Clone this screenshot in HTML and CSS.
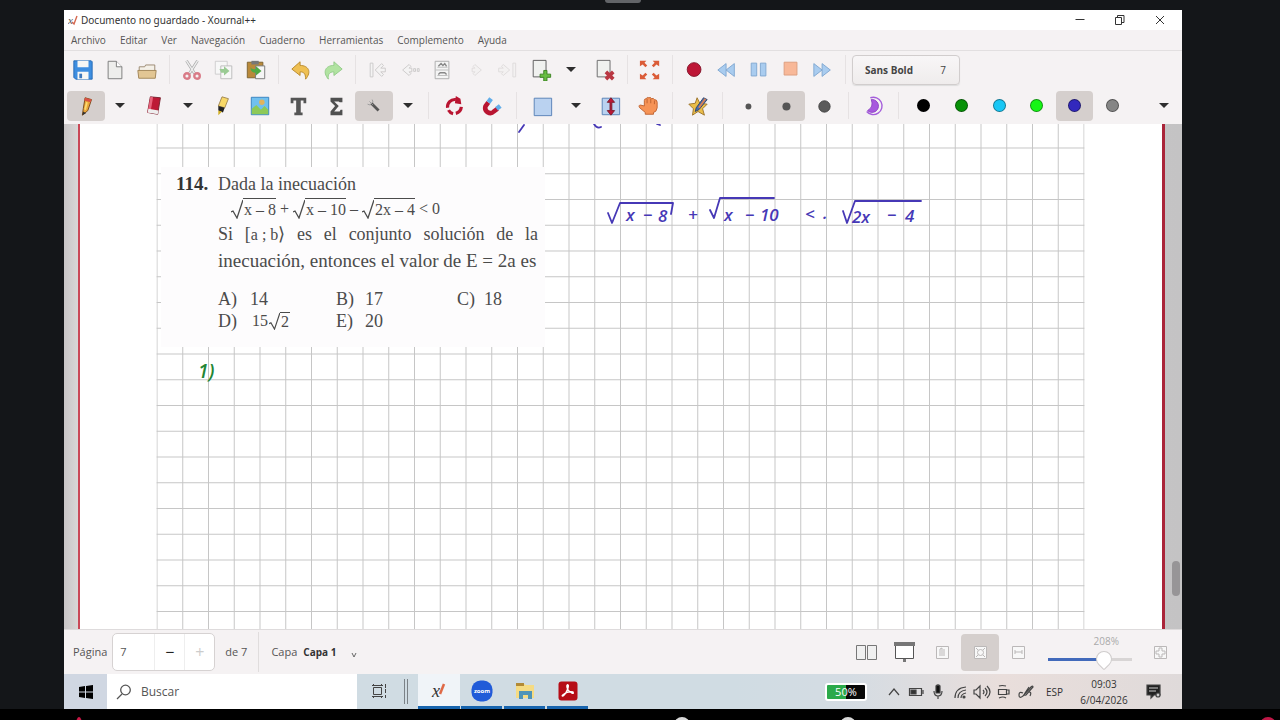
FILE: index.html
```html
<!DOCTYPE html>
<html lang="es">
<head>
<meta charset="utf-8">
<title>Documento no guardado - Xournal++</title>
<link rel="stylesheet" href="styles.css">
</head>
<body>
<div class="handle"></div>
<div class="desktop">
<main class="window">
  <header class="titlebar">
    <svg class="app-icon" width="10" height="12" viewBox="0 0 10 12"><text x="0" y="10" class="x-mark">x</text><path d="M4 8 6 10 9 2" fill="none" stroke="#d5674f" stroke-width="1.4"/></svg>
    <span class="title">Documento no guardado - Xournal++</span>
    <div class="window-controls">
      <button aria-label="Minimizar"><svg width="12" height="12" viewBox="0 0 12 12"><path d="M1.500 5.500H10.500" stroke="#333"/></svg></button>
      <button aria-label="Restaurar"><svg width="12" height="12" viewBox="0 0 12 12"><path d="M1.500 3.500h6v7h-6zM3.500 3.500v-2h6.500v7H7.500" fill="none" stroke="#333"/></svg></button>
      <button aria-label="Cerrar"><svg width="12" height="12" viewBox="0 0 12 12"><path d="M2 2 10 10M10 2 2 10" stroke="#333"/></svg></button>
    </div>
  </header>
  <nav class="menubar">
    <button>Archivo</button><button>Editar</button><button>Ver</button><button>Navegación</button><button>Cuaderno</button><button>Herramientas</button><button>Complemento</button><button>Ayuda</button>
  </nav>

  <div class="toolbar toolbar-main">
    <button class="tool" aria-label="Guardar"><svg viewBox="0 0 24 24"><path d="M2 2h19l1 1v19H4l-2-2z" fill="#3e8ee0" stroke="#2469b5"/><path d="M6 2h12v7H6zM6 14h12v8H6z" fill="#f7f7f5"/><path d="M8 16h3v5H8z" fill="#3e78bc"/></svg></button>
    <button class="tool" aria-label="Nuevo"><svg viewBox="0 0 24 24"><path d="M4.500 2.500h9l6 6v13h-15z" fill="#eeeeec" stroke="#777"/><path d="M13.500 2.500v6h6" fill="#fff" stroke="#777"/></svg></button>
    <button class="tool" aria-label="Abrir"><svg viewBox="0 0 24 24"><path d="M3.500 20V8.500h6l1-2h10V20" fill="#f4f0e8" stroke="#98856c"/><path d="M2 12.500h20l-1 8.500H3z" fill="#e2c694" stroke="#a08355"/></svg></button>
    <span class="sep"></span>
    <button class="tool" aria-label="Cortar"><svg viewBox="0 0 24 24"><path d="M6 2 15 16M18 2 9 16" stroke="#aaa" stroke-width="3"/><path d="M6 2 15 16M18 2 9 16" stroke="#eee" stroke-width="1.500"/><circle cx="6.500" cy="18.500" r="3" fill="none" stroke="#d97b87" stroke-width="2.600"/><circle cx="17.500" cy="18.500" r="3" fill="none" stroke="#d97b87" stroke-width="2.600"/></svg></button>
    <button class="tool" aria-label="Copiar"><svg viewBox="0 0 24 24"><path d="M2.500 2.500h13v14h-13z" fill="#f7f7f7" stroke="#ccc"/><path d="M8.500 7.500h12v14h-12z" fill="#f7f7f7" stroke="#bbb"/><path d="M7 11h5V8l6 5-6 5v-3H9z" fill="#9acb94"/></svg></button>
    <button class="tool" aria-label="Pegar"><svg viewBox="0 0 24 24"><path d="M2.500 3.500h17v17h-17z" fill="#b9893a" stroke="#7b602f"/><path d="M7 2h8v4H7z" fill="#777"/><path d="M11.500 7.500h10v14h-10z" fill="#f5f5f5" stroke="#777"/><path d="M6 9q1 3 6 2V8l6 5-6 5v-3q-6 0-6-6z" fill="#4fa943"/></svg></button>
    <span class="sep"></span>
    <button class="tool" aria-label="Deshacer"><svg viewBox="0 0 24 24"><path d="M11 3 2 11l9 7v-4c5 0 6 3 6 8 7-8 3-15-6-15z" fill="#efc053" stroke="#b78727"/></svg></button>
    <button class="tool" aria-label="Rehacer"><svg viewBox="0 0 24 24"><path d="m13 3 9 8-9 7v-4c-5 0-7 3-6 8C0 14 4 7 13 7z" fill="#b1e3a1" stroke="#92cb88"/></svg></button>
    <span class="sep"></span>
    <button class="tool" aria-label="Primera página"><svg viewBox="0 0 24 24" class="arrow"><path d="M3.500 4.500h3v15h-3zM16 5l-7 7 7 7 2-2-3-3h5v-4h-5l3-3z"/></svg></button>
    <button class="tool" aria-label="Página anterior"><svg viewBox="0 0 24 24" class="arrow"><path d="m11 6-7 6 7 6 2-2-2-2h3v-4h-3l2-2zM16 10.500h2v3h-2zM20 10.500h2v3h-2z"/></svg></button>
    <button class="tool" aria-label="Ir a página"><svg viewBox="0 0 24 24"><path d="M4.500 2.500h15v19h-15z" fill="#f4f4f4" stroke="#aaa"/><path d="M7 9h11M7 18h11M5 12h14" stroke="#bbb"/><path d="m8 8 3-3 2 2 2-2 2 3M8 17l2-2h5l2 2" fill="none" stroke="#888" stroke-width="1.500"/></svg></button>
    <button class="tool" aria-label="Página siguiente"><svg viewBox="0 0 24 24" class="faded"><path d="m13 6 7 6-7 6-2-2 2-2h-3v-4h3l-2-2z"/></svg></button>
    <button class="tool" aria-label="Última página"><svg viewBox="0 0 24 24" class="faded"><path d="m9 6 7 6-7 6-2-2 2-2H4v-4h5L7 8zM19.500 4.500h3v15h-3z"/></svg></button>
    <span class="split"><button class="tool" aria-label="Añadir página"><svg viewBox="0 0 24 24"><path d="M3.500 1.500h14v18h-14z" fill="#f0f1ef" stroke="#555"/><path d="M15 12.500h3.500v4h4V20h-4v4H15v-4h-4v-3.500h4z" fill="#68bd42" stroke="#38811f"/></svg></button><button class="caret" aria-label="Más opciones de página"></button></span>
    <button class="tool" aria-label="Eliminar página"><svg viewBox="0 0 24 24"><path d="M3.500 1.500h14v18h-14z" fill="#f0f1ef" stroke="#666"/><path d="m13 14 8 8M21 14l-8 8" stroke="#b93742" stroke-width="4"/></svg></button>
    <span class="sep"></span>
    <button class="tool" aria-label="Pantalla completa"><svg viewBox="0 0 24 24" fill="#db5c38"><path d="M1 2h7L6 4l3 3-2 2-3-3-3 2zM22 2h-7l2 2-3 3 2 2 3-3 3 2zM1 22h7l-2-2 3-3-2-2-3 3-3-2zM22 22h-7l2-2-3-3 2-2 3 3 3-2z"/></svg></button>
    <span class="sep"></span>
    <button class="tool" aria-label="Grabar"><svg viewBox="0 0 24 24"><circle cx="11" cy="11.500" r="7.500" fill="#bd1636" stroke="#82142a"/></svg></button>
    <button class="tool" aria-label="Retroceder"><svg viewBox="0 0 24 24" class="media"><path d="m11 5-9 7 9 7zM20 5l-9 7 9 7z"/></svg></button>
    <button class="tool" aria-label="Pausa"><svg viewBox="0 0 24 24" class="media"><path d="M3.500 4.500h6v14h-6zM13.500 4.500h6v14h-6z"/></svg></button>
    <button class="tool" aria-label="Detener"><svg viewBox="0 0 24 24"><path d="M4.500 3.500h14v14h-14z" fill="#f8b898" stroke="#dc9c7d"/></svg></button>
    <button class="tool" aria-label="Avanzar"><svg viewBox="0 0 24 24" class="media"><path d="m2 5 9 7-9 7zM11 5l9 7-9 7z"/></svg></button>
    <span class="sep"></span>
    <button class="font-button"><b>Sans Bold</b><span>7</span></button>
  </div>

  <div class="toolbar toolbar-pens">
    <button class="pen selected" aria-label="Lápiz"><svg viewBox="0 0 24 24"><path d="m11 3 7 2-4 12-6 5 1-7z" fill="#e9a63a" stroke="#754718"/><path d="m11 3 7 2-1 3-7-2z" fill="#d95145"/><path d="m13 8-2 8" stroke="#fbda71" stroke-width="2"/><path d="m8 22 1-4 3 2z" fill="#333"/></svg></button><button class="caret" aria-label="Opciones del lápiz"></button>
    <button class="pen" aria-label="Borrador"><svg viewBox="0 0 24 24"><path d="m8 2 11 1-3 18-11-2z" fill="#bd1935" stroke="#77202d"/><path d="m8 2 3 .5-3 17-3-.5z" fill="#e8627a"/><path d="m6 15 11 2-1 4-11-2z" fill="#eee"/></svg></button><button class="caret" aria-label="Opciones del borrador"></button>
    <button class="pen" aria-label="Resaltador"><svg viewBox="0 0 24 24"><path d="m12 2 7 2-4 10-7-2z" fill="#f8d867" stroke="#9e8450"/><path d="m8 12 7 2-2 5-5-2z" fill="#222"/><path d="m8 17 4 1-4 4z" fill="#d1ae22"/></svg></button>
    <button class="pen" aria-label="Imagen"><svg viewBox="0 0 24 24"><path d="M2.500 2.500h19v19h-19z" fill="#70c0ef" stroke="#327fbd"/><circle cx="14" cy="8" r="3" fill="#e1b35c"/><path d="m3 15 5-4 5 5 4-4 4 4v5H3z" fill="#8dc957"/></svg></button>
    <button class="pen" aria-label="Texto"><svg viewBox="0 0 24 24"><path d="M4 3h17v6h-3V6h-3v13h2v3H8v-3h2V6H7v3H4z" fill="#555"/></svg></button>
    <button class="pen" aria-label="Fórmula"><svg viewBox="0 0 24 24"><path d="M6 3h13v5h-3l-1-1h-5l5 5-5 6h6l1-2h2v6H6v-4l5-6-5-5z" fill="#505050"/></svg></button>
    <button class="pen selected" aria-label="Reconocer formas"><svg viewBox="0 0 24 24"><path d="m9 9 8 8" stroke="#555" stroke-width="3"/><path d="m7 7 4 4M10 5l1 3M5 10l3 1" stroke="#999"/></svg></button><button class="caret" aria-label="Más formas"></button>
    <span class="sep"></span>
    <button class="pen" aria-label="Ajustar rotación"><svg viewBox="0 0 24 24"><path d="M5 14A8 8 0 0 1 14 5M20 13a8 8 0 0 1-6 7M11 20.500a8 8 0 0 1-5-4" fill="none" stroke="#b91531" stroke-width="3.500"/><path d="m14 1 5 3 1 6-7-1z" fill="#b91531"/></svg></button>
    <button class="pen" aria-label="Ajustar a cuadrícula"><svg viewBox="0 0 24 24"><path d="m8 8-3 4c-2 6 5 10 9 6l4-3" fill="none" stroke="#b91531" stroke-width="5"/><path d="m8 8 3-4M17 15l4-3" stroke="#62ade8" stroke-width="5"/></svg></button>
    <span class="sep"></span>
    <button class="pen" aria-label="Seleccionar rectángulo"><svg viewBox="0 0 24 24"><path d="M3.500 3.500h19v19h-19z" fill="#bad2f0" stroke="#547fb5"/></svg></button><button class="caret" aria-label="Más selecciones"></button>
    <button class="pen" aria-label="Espacio vertical"><svg viewBox="0 0 24 24"><path d="M3.500 3.500h19v18h-19z" fill="#bad2f0" stroke="#547fb5"/><path d="m13 3 4 5h-3v9h3l-4 5-4-5h3V8H9z" fill="#bd1736" stroke="#771c2c"/></svg></button>
    <button class="pen" aria-label="Mano"><svg viewBox="0 0 24 24"><path d="M8 12V6q0-2 2-2 1-2 3-1 2-1 3 1 2-1 3 1 3 0 3 3v6q-1 5-4 5v2H9v-2l-6-5q-2-3 1-3z" fill="#f69356" stroke="#bd602f"/><path d="M11 4v5M15 4v5M19 6v4" stroke="#bd602f"/></svg></button>
    <span class="sep"></span>
    <button class="pen" aria-label="Pluma predeterminada"><svg viewBox="0 0 24 24"><path d="m11 3 3 6 8 1-5 5 2 7-7-4-6 4 1-7-5-5 7-1z" fill="#eabd49" stroke="#9a722a"/><path d="m10 14 8-11 4 2-9 11-4 2z" fill="#466cad" stroke="#304467"/><path d="m13 14 7-10" stroke="#dc8254" stroke-width="2"/></svg></button>
    <span class="sep"></span>
    <button class="pen" aria-label="Fino"><svg viewBox="0 0 24 24"><circle cx="12.500" cy="12.500" r="3.200" fill="#555"/></svg></button>
    <button class="pen selected" aria-label="Medio"><svg viewBox="0 0 24 24"><circle cx="12.500" cy="12.500" r="4.400" fill="#555"/></svg></button>
    <button class="pen" aria-label="Grueso"><svg viewBox="0 0 24 24"><circle cx="12.500" cy="12.500" r="6.200" fill="#5b5b5b" stroke="#444"/></svg></button>
    <span class="sep"></span>
    <button class="pen" aria-label="Rellenar"><svg viewBox="0 0 24 24"><path d="M8 3a9.500 9.500 0 1 1-4 15" fill="none" stroke="#a45ddb" stroke-width="1.500"/><path d="M9 5a7 7 0 1 1-4 12q7-4 4-12" fill="#a758de" stroke="#8c41c4"/></svg></button>
    <span class="sep"></span>
    <span class="colors">
      <button class="pen" aria-label="Negro"><i class="swatch black"></i></button><button class="pen" aria-label="Verde"><i class="swatch green"></i></button><button class="pen" aria-label="Celeste"><i class="swatch cyan"></i></button><button class="pen" aria-label="Verde claro"><i class="swatch lime"></i></button><button class="pen selected" aria-label="Azul"><i class="swatch blue"></i></button><button class="pen" aria-label="Gris"><i class="swatch gray"></i></button>
    </span>
    <button class="caret overflow" aria-label="Más herramientas"></button>
  </div>

  <section class="workspace">
    <div class="paper">
      <svg class="sheet" width="1082" height="505" viewBox="80 124 1082 505">
        <defs><pattern id="squares" patternUnits="userSpaceOnUse" x="156.500" y="147.500" width="25.750" height="25.750"><path d="M0 .5H25.750M.5 0V25.750" fill="none" stroke="#c6c6c6"/></pattern></defs>
        <path d="M156.500 124h928v505h-928z" fill="url(#squares)"/>
        <g fill="none" stroke="#4638b6" stroke-width="1.800" stroke-linecap="round" stroke-linejoin="round">
          <path d="m524 125-5 7M594 124q3 5 7 3M657 124l3 1"/>
          <path d="m608 213 4 10 8-20h53l-2 11M710 210l4 8 6-20h54M843 211l4 12 8-22h66"/>
        </g>
        <g class="ink blue-ink"><text x="626" y="221">x</text><text x="643" y="221">−</text><text x="658" y="222">8</text><text x="688" y="221">+</text><text x="724" y="221">x</text><text x="745" y="221">−</text><text x="760" y="221">10</text><text x="805" y="220">&lt;</text><text x="823" y="219">.</text><text x="852" y="223">2x</text><text x="887" y="221">−</text><text x="905" y="222">4</text></g>
        <text class="ink green-ink" x="198" y="378">1)</text>
      </svg>
      <article class="problem">
        <strong>114.</strong>
        <div>
          <p>Dada la inecuación</p>
          <p class="formula"><svg class="root" viewBox="0 0 12 20"><path d="m0 13 2-1 4 7 6-18"/></svg><span class="radicand">x – 8</span><span>+</span><svg class="root" viewBox="0 0 12 20"><path d="m0 13 2-1 4 7 6-18"/></svg><span class="radicand">x – 10</span><span>–</span><svg class="root" viewBox="0 0 12 20"><path d="m0 13 2-1 4 7 6-18"/></svg><span class="radicand">2x – 4</span><span>&lt; 0</span></p>
          <p class="spread"><span>Si</span><span>[<small>a ; b</small>⟩</span><span>es</span><span>el</span><span>conjunto</span><span>solución</span><span>de</span><span>la</span></p>
          <p class="last-line">inecuación, entonces el valor de E = 2a es</p>
          <div class="answers"><span>A)</span><span>14</span><span>B)</span><span>17</span><span>C)</span><span>18</span><span>D)</span><span class="formula small-root">15<svg class="root" viewBox="0 0 12 20"><path d="m0 13 2-1 4 7 6-18"/></svg><span class="radicand">2</span></span><span>E)</span><span>20</span></div>
        </div>
      </article>
    </div>
    <div class="scrollbar"><i></i></div>
  </section>

  <footer class="statusbar">
    <label for="page">Página</label>
    <span class="spin"><input id="page" value="7"><button aria-label="Menos">−</button><button aria-label="Más" class="disabled">+</button></span>
    <span>de 7</span>
    <span class="rule"></span>
    <label for="layer">Capa</label>
    <select id="layer"><option>Capa 1</option></select>
    <svg class="chevron" width="8" height="8" viewBox="0 0 8 8"><path d="m2 2 2 4 2-4" fill="none" stroke="#666"/></svg>
    <div class="view-tools">
      <button aria-label="Páginas emparejadas"><svg viewBox="0 0 24 24"><path d="M2.500 5.500h9v14h-9zM13.500 5.500h9v14h-9z" fill="#f0f0f0" stroke="#777"/></svg></button>
      <button aria-label="Presentación"><svg viewBox="0 0 24 24"><path d="M3.500 5.500h18v13h-18z" fill="#fff" stroke="#555"/><path d="M2 2h21v4H2zM11 19h3v3h-3z" fill="#777"/></svg></button>
      <button aria-label="Tamaño 100%"><svg viewBox="0 0 24 24" class="zoom-glyph"><path d="M6.500 6.500h12v12h-12z"/><path d="M10 16V9l2-1v8M14 9v7"/></svg></button>
      <button class="selected" aria-label="Ajustar zoom"><svg viewBox="0 0 24 24" class="zoom-glyph"><path d="M6.500 6.500h12v12h-12z"/><circle cx="12.500" cy="12.500" r="3"/><path d="m8 8 2 2M17 8l-2 2M8 17l2-2M17 17l-2-2"/></svg></button>
      <button aria-label="Ajustar al ancho"><svg viewBox="0 0 24 24" class="zoom-glyph"><path d="M6.500 6.500h12v12h-12z"/><path d="M9 12h7M9 10v4M16 10v4"/></svg></button>
      <label class="zoom"><span>208%</span><input type="range" min="0" max="100" value="71" aria-label="Zoom"></label>
      <button aria-label="Ampliar"><svg viewBox="0 0 24 24" class="zoom-glyph"><path d="M6.500 6.500h12v12h-12z"/><path d="M11 8h3v3h3v3h-3v3h-3v-3H8v-3h3z"/></svg></button>
    </div>
  </footer>

  <div class="taskbar">
    <button class="start" aria-label="Inicio"><svg width="14" height="14" viewBox="0 0 14 14"><path d="m0 2 6-1v5.500H0zM7 1l7-1v6.500H7zM0 7.500h6V13l-6-1zM7 7.500h7V14l-7-1z"/></svg></button>
    <label class="search"><svg width="16" height="16" viewBox="0 0 16 16"><circle cx="9.500" cy="6" r="4.800" fill="none" stroke="#555" stroke-width="1.300"/><path d="m6 10-5 5" stroke="#555" stroke-width="1.300"/></svg><input placeholder="Buscar" aria-label="Buscar"></label>
    <button class="app" aria-label="Vista de tareas"><svg width="16" height="16" viewBox="0 0 16 16"><path d="M2.500 4.500h8v7h-8zM2.500 1v2M10.500 1v2M2.500 13v2M10.500 13v2M1 2.500h11M1 13.500h11M14.500 1v4M14.500 6v4M14.500 12v3" fill="none" stroke="#444"/></svg></button>
    <span class="grip"></span>
    <button class="app active running" aria-label="Xournal++"><svg width="18" height="18" viewBox="0 0 18 18"><text x="2" y="15" class="x-large">x</text><path d="m10 12 4-10" stroke="#df6946" stroke-width="2.500"/></svg></button>
    <button class="app running" aria-label="Zoom"><svg width="22" height="22" viewBox="0 0 22 22"><rect x=".5" y=".5" width="21" height="21" rx="9" fill="#205bd8"/><text x="11" y="13" text-anchor="middle" class="zoom-word">zoom</text></svg></button>
    <button class="app running" aria-label="Explorador de archivos"><svg width="20" height="20" viewBox="0 0 20 20"><path d="M1 3h8l2 1h8v13H1z" fill="#f5db83"/><path d="M1 2h8v3H1z" fill="#b28a36"/><path d="M4 10h13v8h-4v-4H8v4H4z" fill="#4f94b8"/></svg></button>
    <button class="app running" aria-label="Adobe Acrobat"><svg width="20" height="20" viewBox="0 0 20 20"><rect x=".5" y=".5" width="19" height="19" rx="3" fill="#b60d16"/><path d="M9 4q2-1 1 3-2 6-5 8-2 0 1-2 4-3 9-2 1 2-1 1-6-3-5-8" fill="none" stroke="#fff" stroke-width="1.400"/></svg></button>
    <div class="tray">
      <span class="charge">50%</span>
      <svg viewBox="0 0 18 18"><path d="m4 12 5-6 5 6"/></svg>
      <svg viewBox="0 0 18 18"><path d="M2.500 5.500h12v7h-12zM16 7v4"/><path d="M4 7h5v4H4z" fill="#333"/></svg>
      <svg viewBox="0 0 18 18"><path d="M7 3q2-2 4 0v7H7z" fill="#111"/><path d="M5 8q0 5 4 5t4-5M9 13v3"/></svg>
      <svg viewBox="0 0 18 18"><path d="M4 15Q4 5 15 4M7 15q0-7 8-8M10 15q0-4 5-5"/><circle cx="13" cy="14" r="1" fill="#333"/></svg>
      <svg viewBox="0 0 18 18"><path d="M1 7h2l4-4v12l-4-4H1zM10 7q2 2 0 4M12 5q4 4 0 8M14 3q6 6 0 12"/></svg>
      <svg viewBox="0 0 18 18"><path d="M3.500 6.500h8v5h-8zM11 7h3v4h-3M4 3q3-1 7 0M4 15q4-2 7 0"/></svg>
      <svg viewBox="0 0 18 18"><path d="M6 10q-4-2-4 2t4 1l8-9q2-2 2 0l-7 8q-3 1-1-2l4-6M12 9q3 0 1 4"/></svg>
      <span class="lang">ESP</span>
      <time>09:03<br>6/04/2026</time>
      <svg viewBox="0 0 18 18"><path d="M2 2h13v10H9l-3 3v-3H2z" fill="#222"/><path d="M4 5h9M4 8h7" class="light"/><circle cx="13" cy="12" r="2" fill="#ccc"/></svg>
    </div>
  </div>
</main>
</div>
<div class="player-edge"><i class="pip red"></i><i class="pip white"></i><i class="pip white second"></i><i class="pip pink"></i></div>
</body>
</html>
```
FILE: styles.css
```css
* { box-sizing: border-box; }
body { margin: 0; min-height: 100vh; display: flex; flex-direction: column; background: #141619; color: #555; font: 11px/16px "Open Sans", "Noto Sans", sans-serif; overflow: hidden; }
button, input, select { font: inherit; color: inherit; border: 0; background: transparent; padding: 0; margin: 0; }
svg { display: block; flex: none; }
.handle { position: absolute; left: calc(50% - 35px); top: 0; width: 36px; height: 3px; background: #626468; border-radius: 0 0 3px 3px; }
.desktop { flex: 1; display: flex; padding: 10px 98px 0 64px; }
.window { flex: 1; min-width: 0; display: flex; flex-direction: column; background: #f5f2f3; }

.titlebar { display: flex; align-items: center; height: 20px; padding-left: 4px; background: #fff; color: #333; }
.title { margin-left: 3px; font: 10px/20px "Noto Sans", sans-serif; }
.x-mark { font: italic 11px "Liberation Serif", serif; fill: #555; }
.window-controls { display: flex; margin-left: auto; }
.window-controls button { width: 40px; height: 20px; display: grid; place-items: center; }
.window-controls { padding-right: 2px; }
.menubar { display: flex; gap: 14px; height: 21px; padding: 0 7px; border-bottom: 1px solid #e2dfe0; font-size: 10px; }

.toolbar { display: flex; align-items: center; padding: 0 3px; }
.toolbar-main { height: 37px; }
.toolbar-pens { height: 36px; padding-bottom: 1px; }
.tool, .pen { display: grid; place-items: center; height: 30px; flex: none; border-radius: 4px; }
.tool { width: 32px; }
.pen { width: 38px; }
.toolbar svg { width: 22px; height: 22px; }
.sep { flex: none; align-self: stretch; margin: 4px 6px; border-left: 1px solid #e6e2e3; }
.toolbar-pens .sep { width: 0; margin: 4px 6px 4px 5px; }
.selected { background: #d5cfcd; }
.split { display: flex; padding: 0 4px 0 3px; }
.caret { width: 30px; height: 30px; display: grid; place-items: center; flex: none; }
.split .caret { width: 28px; }
.caret::after { content: ""; border: 5px solid transparent; border-top-color: #2e2e2e; border-bottom: 0; }
.overflow { margin-left: auto; }
.arrow { fill: #f4f3f3; stroke: #cac8c8; }
.faded { fill: #f3f1f1; stroke: #dedbdb; }
.media { fill: #a9ccef; stroke: #7fa6d0; }
.font-button { display: flex; align-items: center; justify-content: space-between; width: 108px; height: 30px; padding: 0 13px 0 12px; border: 1px solid #d1cdcd; border-radius: 4px; background: linear-gradient(#f8f6f7, #efecec); color: #444; font-size: 10px; box-shadow: 0 1px 1px #ddd; }
.colors { display: flex; width: 226px; }
.colors .pen { flex: 1; }
.swatch { width: 13px; height: 13px; border-radius: 50%; border: 1px solid rgba(0, 0, 0, .4); }
.black { background: #000; }
.green { background: #079107; }
.cyan { background: #19c7f5; }
.lime { background: #16f516; }
.blue { background: #3228bd; }
.gray { background: #858585; }

.workspace { flex: 1; min-height: 0; display: flex; background: linear-gradient(to right, #c8c5c6, #d9d7d7 14px, #c4c3c4); }
.paper { position: relative; flex: 1; margin-left: 14px; overflow: hidden; background: #fff; border-left: 2px solid #c94857; border-right: 3px solid #aa2439; }
.sheet { position: absolute; left: 0; top: 0; }
.ink { font: italic 600 17px "Open Sans", sans-serif; }
.blue-ink { fill: #4638b6; }
.green-ink { fill: #238534; font-size: 19px; }
.scrollbar { flex: none; width: 17px; display: flex; flex-direction: column; justify-content: flex-end; align-items: flex-end; padding: 0 2px 33px; }
.scrollbar i { width: 8px; height: 35px; border-radius: 4px; background: #979597; }
.problem { position: absolute; left: 81px; top: 43px; width: 384px; height: 180px; display: flex; padding: 6px 7px 0 15px; background: #fdfcfd; color: #4b4b4b; font: 18px/22px "Liberation Serif", serif; }
.problem > strong { flex: none; width: 42px; color: #333; font-size: 19px; }
.problem > div { flex: 1; }
.problem p { margin: 0; white-space: nowrap; }
.formula { display: flex; align-items: center; gap: 4px; }
.problem .formula { font-size: 16px; }
.problem p.formula { padding: 3px 0 2px 13px; line-height: 20px; }
.root { width: 12px; height: 20px; margin-right: -4px; fill: none; stroke: #4b4b4b; stroke-width: 1.3; }
.radicand { border-top: 1px solid #4b4b4b; line-height: 21px; padding-left: 1px; }
.spread { display: flex; justify-content: space-between; line-height: 25px; }
.spread small { font-size: 16px; }
.problem .last-line { font-size: 19px; line-height: 28px; }
.answers { display: grid; grid-template-columns: 32px 86px 29px 92px 27px 1fr; line-height: 22px; margin-top: 13px; }
.problem .small-root { font-size: 16px; gap: 1px; padding-left: 2px; }
.small-root .root { height: 18px; margin: 0 -1px 0 0; width: 11px; }
.small-root .radicand { line-height: 18px; padding: 0 1px; }

.statusbar { display: flex; align-items: center; height: 45px; padding: 0 9px; border-top: 1px solid #dedbdc; }
.spin { display: flex; width: 103px; height: 38px; margin: 0 10px 0 5px; background: #fff; border: 1px solid #d6d2d2; border-radius: 5px; }
.spin input { width: 41px; padding-left: 7px; }
.spin button { flex: 1; border-left: 1px solid #eee; color: #222; font-size: 16px; }
.spin .disabled { color: #ccc; }
.rule { align-self: stretch; border-left: 1px solid #e0dddd; margin: 2px 12px 2px 11px; }
.statusbar select { appearance: none; margin-left: 6px; width: 40px; font-size: 10px; font-weight: bold; color: #333; }
.chevron { margin: 5px 0 0 7px; }
.view-tools { display: flex; align-items: center; margin-left: auto; }
.view-tools button { width: 38px; height: 37px; display: grid; place-items: center; border-radius: 4px; }
.view-tools svg { width: 24px; height: 24px; }
.zoom-glyph { fill: #f8f8f8; stroke: #bbb8b8; }
.zoom { display: grid; width: 84px; margin: 0 9px 0 11px; color: #aaa; font-size: 10px; }
.zoom span { justify-self: end; padding-right: 13px; line-height: 14px; }
.zoom input { appearance: none; width: 100%; height: 22px; background: linear-gradient(to right, #426abb 68%, #d8d5d5 68%) center / 100% 3px no-repeat; }
.zoom input::-webkit-slider-thumb { appearance: none; width: 16px; height: 16px; border-radius: 50% 50% 50% 10%; transform: rotate(-45deg); background: #fff; border: 1px solid #cfcccc; }
.view-tools button:last-child { margin-right: -6px; }

.taskbar { display: flex; align-items: stretch; height: 35px; background: linear-gradient(to right, #d0dce3 60%, #d4dce3 70%, #e9dedb 84%, #dfdada); color: #333; }
.start { width: 43px; display: grid; place-items: center; background: #d0d7e2; }
.search { display: flex; align-items: center; width: 250px; padding-left: 9px; gap: 9px; background: #fff; font-size: 12px; }
.search input { width: 180px; }
.search input::placeholder { color: #555; opacity: 1; }
.app { width: 43px; display: grid; place-items: center; border-bottom: 3px solid transparent; padding-top: 2px; }
.running { border-image: linear-gradient(to right, transparent 4px, #1764ad 4px, #1764ad 39px, transparent 39px) 3; border-bottom-width: 3px; }
.active { width: 42px; background: #f0f4f8; border-image: none; border-bottom-color: #1764ad; }
.grip { width: 4px; margin: 5px 10px 5px 4px; border: 1px solid #7b8287; border-width: 0 1px; }
.x-large { font: italic 18px "Liberation Serif", serif; fill: #333; }
.zoom-word { font: bold 6px "Open Sans", sans-serif; fill: #fff; }
.tray { display: flex; align-items: center; margin-left: auto; padding-right: 19px; gap: 4px; }
.tray svg { width: 18px; height: 18px; fill: none; stroke: #444; stroke-width: 1.2; }
.tray .light { stroke: #ccc; }
.charge { width: 42px; border: 2px solid #fff; border-radius: 3px; margin-right: 14px; background: linear-gradient(to right, #2baa4a 50%, #080808 50%); color: #fff; text-align: center; line-height: 14px; }
.lang { margin: 0 8px 0 7px; font-size: 10px; }
.tray time { width: 58px; margin-right: 8px; text-align: center; font-size: 10px; line-height: 16px; }

.player-edge { position: relative; height: 11px; background: #000; overflow: hidden; }
.pip { position: absolute; border-radius: 50%; width: 16px; height: 16px; top: 8px; }
.red { left: 76px; width: 6px; background: #c81746; }
.white { left: 674px; background: #d8d8d8; }
.second { left: 840px; }
.pink { left: auto; right: 4px; background: #bd1746; }
```
